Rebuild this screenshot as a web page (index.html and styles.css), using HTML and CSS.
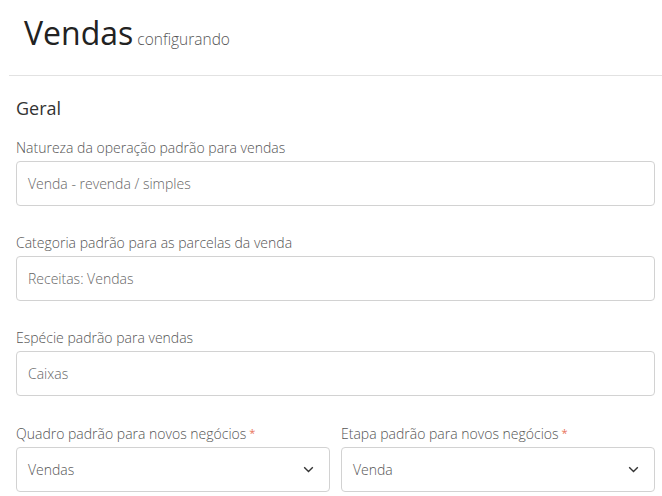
FILE: index.html
```html
<!DOCTYPE html>
<html lang="pt">
<head>
<meta charset="utf-8">
<link rel="stylesheet" href="styles.css">
</head>
<body>
<header class="page-header">
  <h1 class="title">Vendas<small class="subtitle">configurando</small></h1>
</header>
<hr class="divider">
<main class="content">
  <h2 class="section-title">Geral</h2>
  <div class="field">
    <label class="label">Natureza da operação padrão para vendas</label>
    <div class="input">Venda - revenda / simples</div>
  </div>
  <div class="field">
    <label class="label">Categoria padrão para as parcelas da venda</label>
    <div class="input">Receitas: Vendas</div>
  </div>
  <div class="field">
    <label class="label">Espécie padrão para vendas</label>
    <div class="input">Caixas</div>
  </div>
  <div class="row">
    <div class="field">
      <label class="label">Quadro padrão para novos negócios<span class="req">*</span></label>
      <div class="input select">Vendas
        <svg class="chev" width="11" height="7" viewBox="0 0 11 7"><path d="M1.2 1.2 L5.5 5.5 L9.8 1.2" fill="none" stroke="#333" stroke-width="1.4"/></svg>
      </div>
    </div>
    <div class="field">
      <label class="label">Etapa padrão para novos negócios<span class="req">*</span></label>
      <div class="input select">Venda
        <svg class="chev" width="11" height="7" viewBox="0 0 11 7"><path d="M1.2 1.2 L5.5 5.5 L9.8 1.2" fill="none" stroke="#333" stroke-width="1.4"/></svg>
      </div>
    </div>
  </div>
</main>
</body>
</html>
```
FILE: styles.css
```css
* { box-sizing: border-box; }
body {
  margin: 0;
  font-family: "Open Sans", "Noto Sans", sans-serif;
  background: #fff;
  color: #333;
}
.page-header {
  padding: 14px 0 0 24px;
}
.title {
  margin: 0;
  font-size: 32px;
  line-height: 38px;
  font-weight: 400;
  color: #222;
}
.subtitle {
  font-size: 15.5px;
  line-height: 1;
  font-weight: 300;
  color: #555;
  margin-left: 4px;
}
.divider {
  margin: 23px 0 0 9px;
  border: 0;
  border-top: 1px solid #e2e2e2;
  height: 0;
}
.content {
  padding: 0 7px 0 16px;
}
.section-title {
  margin: 20px 0 18px;
  font-size: 18px;
  line-height: 24px;
  font-weight: 400;
  color: #333;
}
.field {
  display: flex;
  flex-direction: column;
  margin-bottom: 27px;
}
.label {
  font-size: 14px;
  line-height: 20px;
  font-weight: 300;
  color: #555;
  margin-bottom: 3px;
}
.req {
  color: #e8735a;
  font-size: 11px;
  font-weight: 400;
  margin-left: 3px;
  vertical-align: 2px;
}
.input {
  height: 45px;
  border: 1px solid #d2d2d2;
  border-radius: 4px;
  padding: 0 11px;
  font-size: 14px;
  line-height: 20px;
  font-weight: 300;
  color: #666;
  display: flex;
  align-items: center;
}
.select {
  justify-content: space-between;
  color: #555;
}
.chev {
  margin-right: 4px;
}
.row {
  display: grid;
  grid-template-columns: 1fr 1fr;
  column-gap: 11px;
}
```
